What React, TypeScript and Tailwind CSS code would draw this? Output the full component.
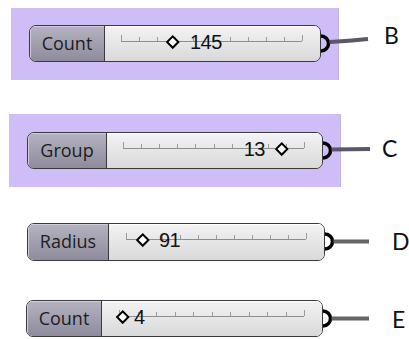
type SliderProps = {
  label: string;
  size: string;
  labelW: string;
  track: [number, number];
  value: string;
  pad: string;
  gap: string;
  valueFirst?: boolean;
};

const TRACK_Y = 15;

function Track({ start, end }: { start: number; end: number }) {
  const ticks = Array.from({ length: 11 }, (_, i) => start + ((end - start) * i) / 10);
  return (
    <svg className="absolute inset-0 h-full w-full" aria-hidden>
      <line x1={start} y1={TRACK_Y + 0.5} x2={end} y2={TRACK_Y + 0.5} stroke="#8f8f8f" strokeWidth="1" />
      {ticks.map((x, i) => (
        <line
          key={i}
          x1={Math.round(x) + 0.5}
          x2={Math.round(x) + 0.5}
          y1={i === 0 || i === 10 ? TRACK_Y - 6 : TRACK_Y - 4}
          y2={TRACK_Y}
          stroke="#9c9c9c"
          strokeWidth="1"
        />
      ))}
    </svg>
  );
}

function Diamond() {
  return (
    <span className="flex h-[13px] w-[13px] shrink-0 items-center justify-center">
      <span className="h-[9.5px] w-[9.5px] rotate-45 border-[2.5px] border-black bg-white" />
    </span>
  );
}

function Slider({ label, size, labelW, track, value, pad, gap, valueFirst }: SliderProps) {
  return (
    <div
      className={`flex shrink-0 overflow-hidden rounded-[7px] border-[1.5px] border-[#3a3a3c] ${size}`}
    >
      <div
        className={`flex shrink-0 items-center justify-center border-r-[1.5px] border-[#3a3a3c] bg-gradient-to-b from-[#b5b3c1] to-[#8e8c9c] pb-[1px] text-[18px] text-[#1c1c22] shadow-[inset_1px_1px_0_#d0cfd8] ${labelW}`}
        style={{ fontFamily: '"Open Sans", "DejaVu Sans", sans-serif' }}
      >
        {label}
      </div>
      <div className="relative flex-1 bg-gradient-to-b from-[#f3f3f3] to-[#d9d9d9] shadow-[inset_0_1px_0_#ffffff]">
        <Track start={track[0]} end={track[1]} />
        <div
          className={`relative flex h-[31px] items-center text-[20px] leading-none tracking-[-0.5px] text-[#111] ${pad}`}
          style={{ fontFamily: '"Liberation Sans", Arial, sans-serif' }}
        >
          {valueFirst ? (
            <>
              <span className={gap}>{value}</span>
              <Diamond />
            </>
          ) : (
            <>
              <Diamond />
              <span className={gap}>{value}</span>
            </>
          )}
        </div>
      </div>
    </div>
  );
}

function Wire({ curve, color }: { curve: string; color: string }) {
  return (
    <svg className="h-[37px] w-[48px] shrink-0 overflow-visible" aria-hidden>
      <path d="M 0 11 A 7.5 7.5 0 0 1 0 26" fill="none" stroke="#000" strokeWidth="3.5" />
      <path d={curve} fill="none" stroke={color} strokeWidth="3.8" strokeLinecap="butt" />
    </svg>
  );
}

function Letter({ children, className }: { children: string; className: string }) {
  return (
    <div
      className={`text-[23px] leading-none text-[#111] ${className}`}
      style={{ fontFamily: 'Lato, "Open Sans", sans-serif' }}
    >
      {children}
    </div>
  );
}

export default function App() {
  return (
    <div className="h-[339px] w-[409px] overflow-hidden bg-white">
      {/* B */}
      <div className="flex items-start pt-[8px]">
        <div className="ml-[11px] flex h-[72px] w-[328px] shrink-0 items-start border-r border-[#c2b2e6] bg-[#cebdf7] pl-[18px] pt-[17px]">
          <Slider
            label="Count"
            size="w-[292px] h-[37px]"
            labelW="w-[75px]"
            track={[16, 197]}
            value="145"
            pad="pl-[61px]"
            gap="ml-[11px]"
          />
          <Wire curve="M 8.5 17 Q 28 16 47 14" color="#5b5766" />
        </div>
        <Letter className="ml-[45px] mt-[16px]">B</Letter>
      </div>

      {/* C */}
      <div className="mt-[34px] flex items-start">
        <div className="ml-[9px] flex h-[73px] w-[332px] shrink-0 items-start border-r border-[#c2b2e6] bg-[#cebdf7] pl-[18px] pt-[18px]">
          <Slider
            label="Group"
            size="w-[296px] h-[37px]"
            labelW="w-[79px]"
            track={[16, 197]}
            value="13"
            pad="justify-end pr-[34px]"
            gap="mr-[10px]"
            valueFirst
          />
          <Wire curve="M 8.5 17.5 Q 28 17 47 17" color="#5b5766" />
        </div>
        <Letter className="ml-[41px] mt-[23px]">C</Letter>
      </div>

      {/* D */}
      <div className="mt-[36px] flex items-start">
        <div className="ml-[27px] flex items-start">
          <Slider
            label="Radius"
            size="w-[298px] h-[38px]"
            labelW="w-[81px]"
            track={[17, 197]}
            value="91"
            pad="pl-[27px]"
            gap="ml-[10px]"
          />
          <Wire curve="M 8.5 18.5 L 44 18.5" color="#666666" />
        </div>
        <Letter className="ml-[19px] mt-[7px]">D</Letter>
      </div>

      {/* E */}
      <div className="mt-[39px] flex items-start">
        <div className="ml-[26px] flex items-start">
          <Slider
            label="Count"
            size="w-[297px] h-[37px]"
            labelW="w-[75px]"
            track={[17, 202]}
            value="4"
            pad="pl-[14px]"
            gap="ml-[5px]"
          />
          <Wire curve="M 8.5 18.5 L 46 18.5" color="#666666" />
        </div>
        <Letter className="ml-[21px] mt-[8px]">E</Letter>
      </div>
    </div>
  );
}
